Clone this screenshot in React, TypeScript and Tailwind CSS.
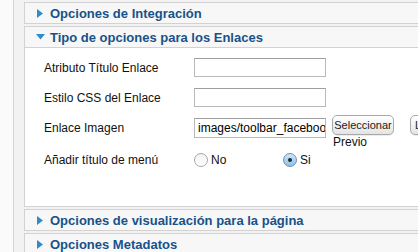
import React from "react";

const font = { fontFamily: '"Liberation Sans", Arial, sans-serif' };

function Caret({ open }: { open?: boolean }) {
  return open ? (
    <svg width="9" height="6" viewBox="0 0 9 6" className="shrink-0">
      <path d="M0 0 L9 0 L4.5 5.5 Z" fill="#2f8ccb" />
    </svg>
  ) : (
    <svg width="6" height="9" viewBox="0 0 6 9" className="shrink-0">
      <path d="M0 0 L6 4.5 L0 9 Z" fill="#2f8ccb" />
    </svg>
  );
}

function PanelHeader({ title, open }: { title: string; open?: boolean }) {
  return (
    <div className="flex h-[20px] items-center bg-[#f7f7f7]">
      <div className={open ? "ml-[11px] mr-[5px] flex w-[9px] shrink-0" : "ml-[12px] mr-[7px] flex w-[6px] shrink-0"}>
        <Caret open={open} />
      </div>
      <span className="whitespace-nowrap text-[13px] font-bold leading-none text-[#17528a]">{title}</span>
    </div>
  );
}

function Panel({ title, open, children }: { title: string; open?: boolean; children?: React.ReactNode }) {
  return (
    <div className="mb-[2px] border-y border-l border-[#d2d2d2]">
      <PanelHeader title={title} open={open} />
      {children}
    </div>
  );
}

function TextInput({ value = "", h = "h-[19px]" }: { value?: string; h?: string }) {
  return (
    <div className={`flex ${h} w-[132px] shrink-0 items-center overflow-hidden whitespace-nowrap border border-[#b9b9b9] border-t-[#9f9f9f] bg-white pl-[3px] text-[12px] text-black`}>
      {value}
    </div>
  );
}

function Btn({ label, w }: { label: string; w?: string }) {
  return (
    <div className={`flex h-[20px] ${w ?? ""} shrink-0 items-center justify-center whitespace-nowrap rounded-[5px] border border-[#a9a9a9] bg-gradient-to-b from-white to-[#e4e4e4] px-[4px] text-[11px] text-[#222] shadow-[0_1px_1px_rgba(0,0,0,0.08)]`}>
      {label}
    </div>
  );
}

function Radio({ checked }: { checked?: boolean }) {
  return checked ? (
    <span className="flex h-[14px] w-[14px] shrink-0 items-center justify-center rounded-full border border-[#6c8fb3] bg-gradient-to-b from-[#cfe6f8] to-[#8fbfe6]">
      <span className="h-[4px] w-[4px] rounded-full bg-[#1d2a38]" />
    </span>
  ) : (
    <span className="h-[14px] w-[14px] shrink-0 rounded-full border border-[#a8a8a8] bg-gradient-to-b from-[#f2f2f2] to-white" />
  );
}

export default function App() {
  return (
    <div className="h-[252px] w-[418px] overflow-hidden bg-[#fafafa]" style={font}>
      <div className="ml-[13px] h-full border-l border-[#d4d4d4] bg-[#f2f2f2] pl-[10px] pt-[2px]">
        <Panel title="Opciones de Integración" />
        <Panel title="Tipo de opciones para los Enlaces" open>
          <div className="h-[159px] overflow-hidden border-t border-[#d2d2d2] bg-white pl-[19px] pt-[10px] text-[12px] text-[#111]">
            <div className="mb-[11px] flex h-[19px] items-center">
              <span className="w-[150px] shrink-0">Atributo Título Enlace</span>
              <TextInput />
            </div>
            <div className="mb-[11px] flex h-[19px] items-center">
              <span className="w-[150px] shrink-0">Estilo CSS del Enlace</span>
              <TextInput />
            </div>
            <div className="flex items-start">
              <span className="mt-[1px] w-[150px] shrink-0">Enlace Imagen</span>
              <TextInput value="images/toolbar_facebook.png" h="h-[20px]" />
              <div className="-mt-[3px] ml-[6px] flex shrink-0 flex-col">
                <Btn label="Seleccionar" w="w-[62px]" />
                <span className="ml-[1px] mt-[1px] leading-[12px]">Previo</span>
              </div>
              <div className="-mt-[3px] ml-[16px] shrink-0">
                <Btn label="Limpiar" />
              </div>
            </div>
            <div className="mt-[4px] flex h-[16px] items-center">
              <span className="w-[150px] shrink-0">Añadir título de menú</span>
              <Radio />
              <span className="ml-[3px] w-[72px] shrink-0">No</span>
              <Radio checked />
              <span className="ml-[3px]">Si</span>
            </div>
          </div>
        </Panel>
        <Panel title="Opciones de visualización para la página" />
        <Panel title="Opciones Metadatos" />
      </div>
    </div>
  );
}
